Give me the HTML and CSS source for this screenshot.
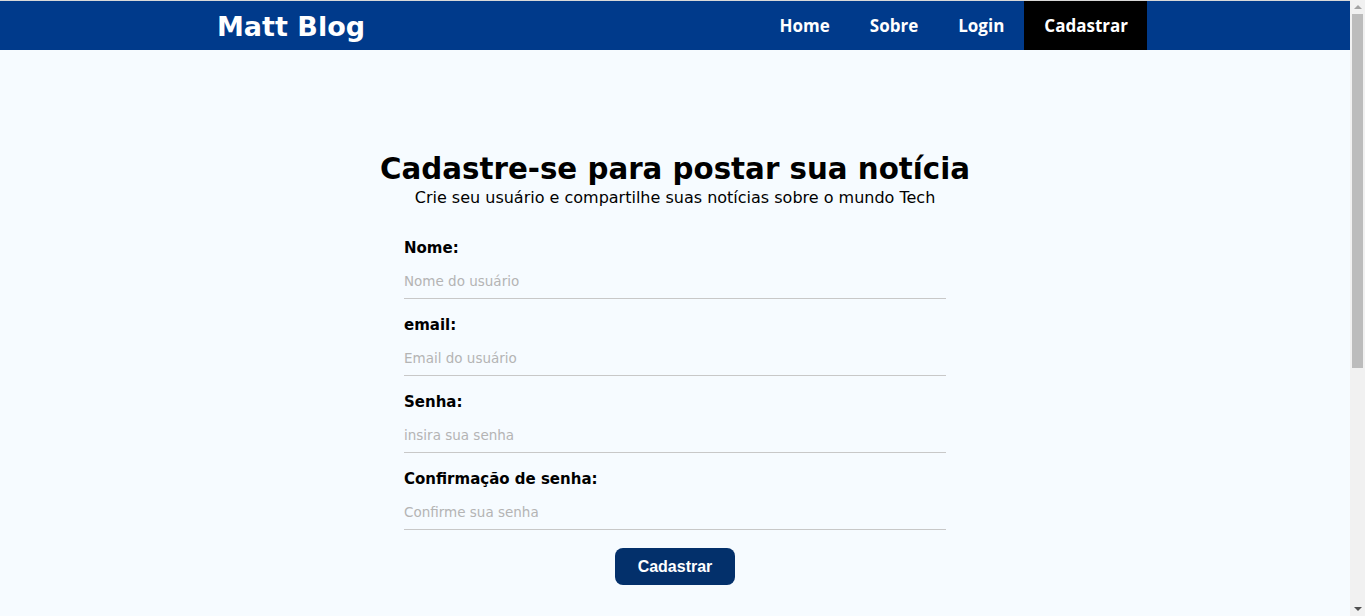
FILE: index.html
```html
<!DOCTYPE html>
<html lang="pt-BR">
<head>
<meta charset="utf-8">
<title>Matt Blog - Cadastrar</title>
<link rel="stylesheet" href="styles.css">
</head>
<body>
<div class="viewport">
  <header class="topbar">
    <div class="topbar-inner">
      <a class="brand" href="#">Matt Blog</a>
      <nav class="menu">
        <a class="menu-link" href="#">Home</a>
        <a class="menu-link" href="#">Sobre</a>
        <a class="menu-link" href="#">Login</a>
        <a class="menu-link active" href="#">Cadastrar</a>
      </nav>
    </div>
  </header>
  <main class="page">
    <section class="signup">
      <h1 class="title">Cadastre-se para postar sua notícia</h1>
      <p class="subtitle">Crie seu usuário e compartilhe suas notícias sobre o mundo Tech</p>
      <form class="form">
        <div class="field">
          <label class="label" for="nome">Nome:</label>
          <input class="input" id="nome" type="text" placeholder="Nome do usuário">
        </div>
        <div class="field">
          <label class="label" for="email">email:</label>
          <input class="input" id="email" type="email" placeholder="Email do usuário">
        </div>
        <div class="field">
          <label class="label" for="senha">Senha:</label>
          <input class="input" id="senha" type="password" placeholder="insira sua senha">
        </div>
        <div class="field">
          <label class="label" for="conf">Confirmação de senha:</label>
          <input class="input" id="conf" type="password" placeholder="Confirme sua senha">
        </div>
        <div class="actions">
          <button class="submit" type="button">Cadastrar</button>
        </div>
      </form>
    </section>
  </main>
</div>
<div class="scrollbar" aria-hidden="true">
  <span class="arrow up"></span>
  <span class="track"><span class="thumb"></span></span>
  <span class="arrow down"></span>
</div>
</body>
</html>
```
FILE: styles.css
```css
* { box-sizing: border-box; }
html, body { margin: 0; padding: 0; }
body {
  background: #f6fbff;
  font-family: "DejaVu Sans", "Noto Sans", sans-serif;
  color: #000;
  border-top: 1px solid #d8d8d8;
  overflow: hidden;
}
.viewport {
  margin-right: 15px;
}
.topbar {
  background: #003a8b;
  height: 49px;
}
.topbar-inner {
  display: flex;
  align-items: stretch;
  justify-content: space-between;
  height: 100%;
  padding: 0 203px 0 217px;
}
.brand {
  color: #fff;
  text-decoration: none;
  font-family: "DejaVu Sans", sans-serif;
  font-weight: 700;
  font-size: 27px;
  display: flex;
  align-items: center;
  padding-top: 1px;
}
.menu { display: flex; align-items: stretch; }
.menu-link {
  color: #fff;
  text-decoration: none;
  font-family: "Open Sans", sans-serif;
  font-weight: 700;
  font-size: 17px;
  display: flex;
  align-items: center;
  padding: 0 20px;
}
.menu-link.active { background: #000; padding: 0 19px 0 20px; }
.page { padding: 100px 0 20px; }
.signup {
  display: flex;
  flex-direction: column;
  align-items: center;
}
.title {
  margin: 0;
  font-size: 29.3px;
  font-weight: 700;
  line-height: 38px;
}
.subtitle {
  margin: 0;
  font-size: 16px;
  line-height: 20px;
}
.form {
  width: 542px;
  margin-top: 20px;
  display: flex;
  flex-direction: column;
}
.field {
  display: flex;
  flex-direction: column;
  height: 77px;
}
.label {
  font-weight: 700;
  font-size: 15px;
  line-height: 20px;
  padding-top: 10px;
}
.input {
  border: 0;
  border-bottom: 1px solid #c8c8c8;
  background: transparent;
  font-family: "DejaVu Sans", sans-serif;
  font-size: 13.5px;
  padding: 15px 0 9px;
  outline: none;
}
.input::placeholder { color: #b4b4b4; }
.actions {
  display: flex;
  justify-content: center;
  padding-top: 12px;
}
.submit {
  width: 120px;
  height: 37px;
  border: 0;
  border-radius: 8px;
  background: #03306b;
  color: #fff;
  font-family: "Liberation Sans", Arial, sans-serif;
  font-weight: 700;
  font-size: 16px;
}
.scrollbar {
  position: fixed;
  top: 0;
  right: 0;
  width: 15px;
  height: 100%;
  background: #f1f1f1;
  display: flex;
  flex-direction: column;
  align-items: center;
}
.arrow {
  flex: 0 0 14px;
  width: 15px;
  display: flex;
  justify-content: center;
  align-items: center;
}
.arrow.up::before {
  content: "";
  border-left: 4px solid transparent;
  border-right: 4px solid transparent;
  border-bottom: 4px solid #a3a3a3;
}
.arrow.down::before {
  content: "";
  border-left: 4px solid transparent;
  border-right: 4px solid transparent;
  border-top: 4px solid #505050;
}
.track {
  flex: 1;
  width: 100%;
  display: flex;
  justify-content: center;
}
.thumb {
  width: 11px;
  height: 354px;
  background: #bcbcbc;
}
```
